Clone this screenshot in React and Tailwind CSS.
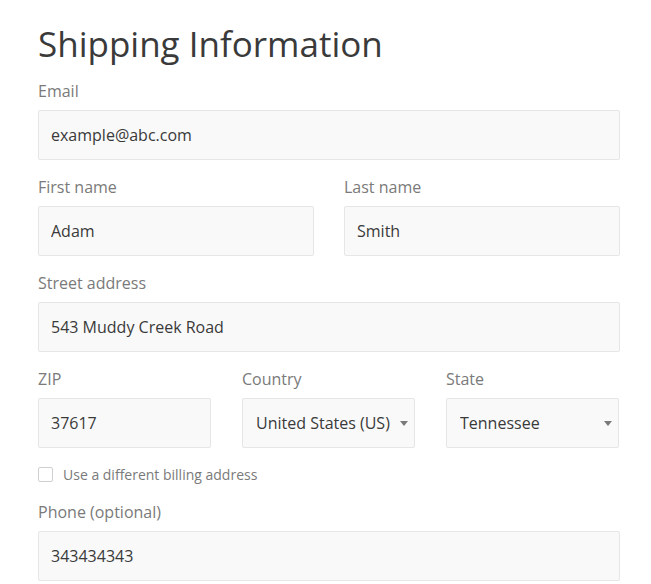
import React from 'react'

const font = { fontFamily: '"Open Sans", "Liberation Sans", sans-serif' }

function Field({ label, children }) {
    return (
        <div className="flex flex-col min-w-0">
            <label className="text-[16px] leading-[24px] text-[#7a7a7a] mb-[7px]">{label}</label>
            {children}
        </div>
    )
}

function TextInput({ value }) {
    return (
        <input
            readOnly
            value={value}
            className="h-[50px] w-full bg-[#f9f9f9] border border-[#e6e6e6] rounded-[2px] px-[12px] text-[16px] text-[#3a3a3a] outline-none"
        />
    )
}

function Select({ value }) {
    return (
        <div className="relative">
            <select
                value={value}
                onChange={() => {}}
                className="appearance-none h-[50px] w-full bg-[#f9f9f9] border border-[#e6e6e6] rounded-[2px] pl-[13px] pr-[24px] text-[16px] text-[#3a3a3a] outline-none"
            >
                <option>{value}</option>
            </select>
            <svg className="absolute right-[7px] top-[23px] pointer-events-none" width="8" height="5" viewBox="0 0 8 5">
                <path d="M0 0 L8 0 L4 5 Z" fill="#7a7a7a" />
            </svg>
        </div>
    )
}

export default function App() {
    return (
        <div className="min-h-screen bg-white pl-[38px] pr-[31px] pt-[22px]" style={font}>
            <h1 className="text-[35px] leading-[44px] text-[#3a3a3a] mb-[13px]">Shipping Information</h1>
            <div className="flex flex-col gap-[15px]">
                <Field label="Email">
                    <TextInput value="example@abc.com" />
                </Field>
                <div className="grid grid-cols-2 gap-[30px]">
                    <Field label="First name">
                        <TextInput value="Adam" />
                    </Field>
                    <Field label="Last name">
                        <TextInput value="Smith" />
                    </Field>
                </div>
                <Field label="Street address">
                    <TextInput value="543 Muddy Creek Road" />
                </Field>
                <div className="grid grid-cols-[173px_173px_173px] gap-[31px]">
                    <Field label="ZIP">
                        <TextInput value="37617" />
                    </Field>
                    <Field label="Country">
                        <Select value="United States (US)" />
                    </Field>
                    <Field label="State">
                        <Select value="Tennessee" />
                    </Field>
                </div>
                <label className="flex items-center gap-[10px] h-[22px]">
                    <input
                        type="checkbox"
                        className="appearance-none shrink-0 w-[15px] h-[15px] border border-[#cfcfcf] rounded-[2px] bg-white"
                    />
                    <span className="text-[14px] text-[#7a7a7a]">Use a different billing address</span>
                </label>
                <Field label="Phone (optional)">
                    <TextInput value="343434343" />
                </Field>
            </div>
        </div>
    )
}
